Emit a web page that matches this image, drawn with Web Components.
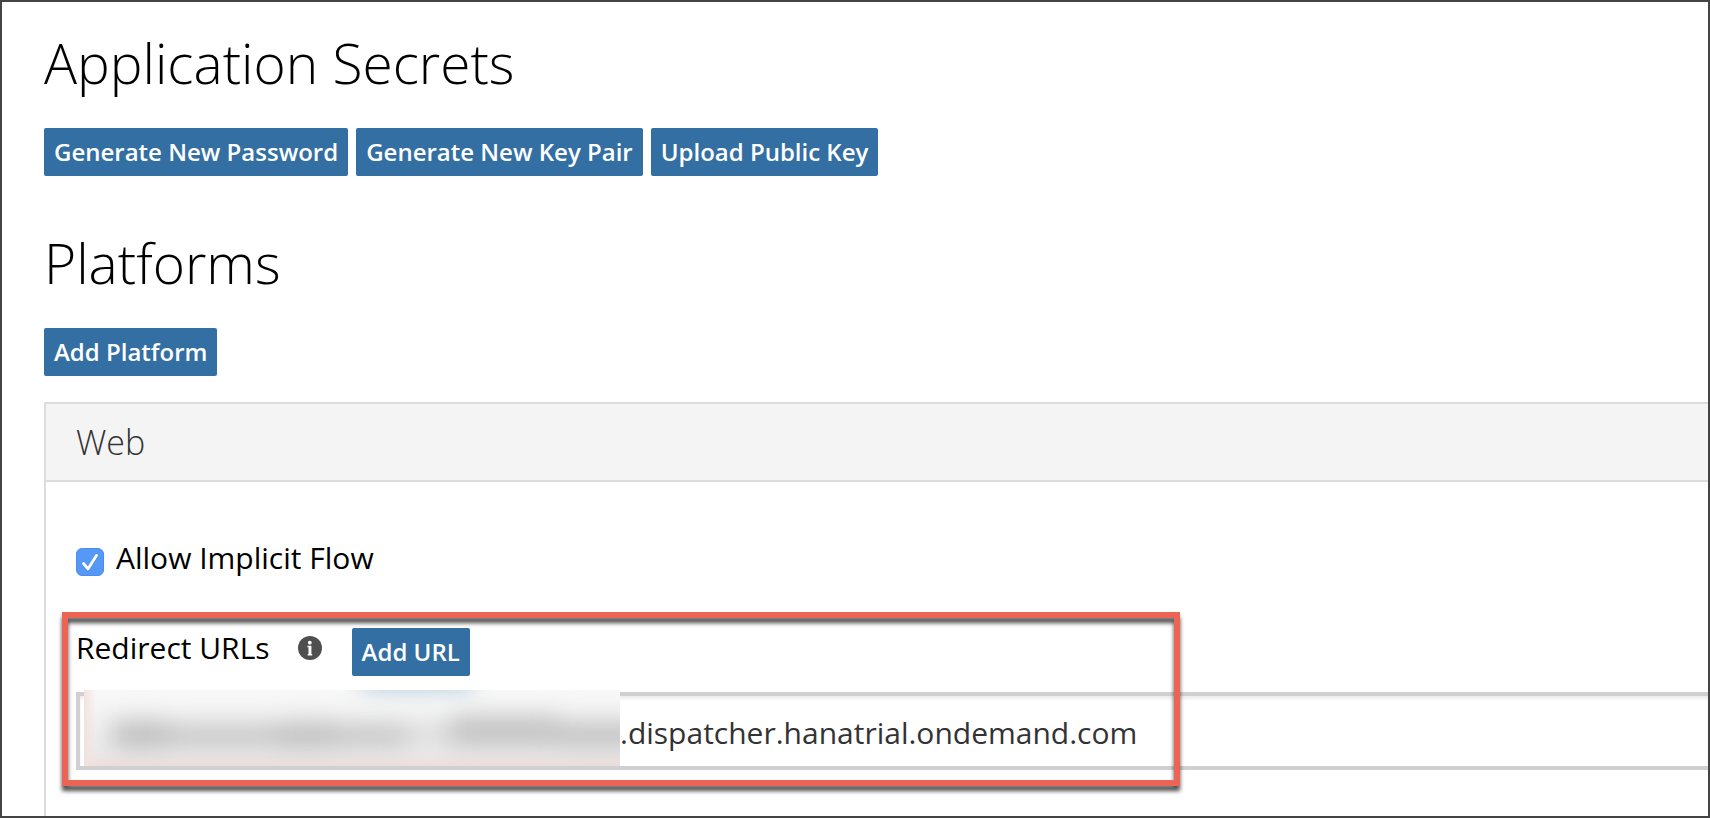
<!DOCTYPE html>
<html lang="en">
<head>
<meta charset="utf-8">
<title>Application Settings</title>
<style>
  body { margin: 0; font-family: "Open Sans", "Noto Sans", sans-serif; color: #000; background: #fff; }
</style>
</head>
<body>
<settings-page>
  <settings-section heading="Application Secrets">
    <action-button>Generate New Password</action-button>
    <action-button>Generate New Key Pair</action-button>
    <action-button>Upload Public Key</action-button>
  </settings-section>
  <settings-section heading="Platforms">
    <action-button>Add Platform</action-button>
  </settings-section>
  <platform-panel heading="Web">
    <check-option>Allow Implicit Flow</check-option>
    <redirect-urls></redirect-urls>
  </platform-panel>
</settings-page>

<script>
const define = (name, html, setup) => customElements.define(name, class extends HTMLElement {
  constructor() {
    super();
    this.attachShadow({ mode: 'open' }).innerHTML = html;
  }
  connectedCallback() { if (setup) setup(this, this.shadowRoot); }
});

define('settings-page', `
  <style>
    :host { display: block; }
    main {
      box-sizing: border-box; min-height: 100vh; border: 2px solid #444;
      padding: 24px 0 0 42px; display: flex; flex-direction: column;
    }
    ::slotted(settings-section:not(:first-child)) { margin-top: 50px; }
    ::slotted(platform-panel) { margin-top: 26px; flex: 1; }
  </style>
  <main><slot></slot></main>`);

define('settings-section', `
  <style>
    :host { display: block; }
    h2 { margin: 0 0 28px; font-size: 55px; line-height: 74px; font-weight: 300; }
    div { display: flex; flex-wrap: wrap; gap: 8px; }
  </style>
  <h2></h2>
  <div><slot></slot></div>`,
  (el, root) => { root.querySelector('h2').textContent = el.getAttribute('heading'); });

define('action-button', `
  <style>
    :host { display: block; }
    button {
      display: block; height: 48px; padding: 0 10px; border: 0; border-radius: 2px;
      background: #336fa2; color: #fff; font: 600 24px/48px "Open Sans", "Noto Sans", sans-serif;
      white-space: nowrap; cursor: pointer;
    }
  </style>
  <button type="button"><slot></slot></button>`);

define('platform-panel', `
  <style>
    :host { display: block; border: solid #dcdcdc; border-width: 2px 0 0 2px; border-top-left-radius: 2px; }
    h3 {
      margin: 0; padding: 0 30px; background: #f4f4f4; border-bottom: 2px solid #dcdcdc;
      color: #333; font-size: 34px; line-height: 76px; font-weight: 300;
    }
    div { padding: 56px 0 46px 30px; }
    ::slotted(redirect-urls) { margin-top: 50px; }
  </style>
  <h3></h3>
  <div><slot></slot></div>`,
  (el, root) => { root.querySelector('h3').textContent = el.getAttribute('heading'); });

define('check-option', `
  <style>
    :host { display: block; }
    label { display: flex; align-items: center; gap: 12px; font-size: 30px; line-height: 40px; }
    span { position: relative; display: block; width: 28px; height: 28px; margin-top: 8px; }
    input {
      appearance: none; display: block; box-sizing: border-box; width: 28px; height: 28px; margin: 0;
      border: 1px solid #4a8cf0; border-radius: 6px; background: #fff;
    }
    input:checked { background: #5598f6; }
    svg { position: absolute; inset: 0; pointer-events: none; }
    input:not(:checked) + svg { display: none; }
  </style>
  <label>
    <span>
      <input type="checkbox" checked>
      <svg width="28" height="28" viewBox="0 0 28 28" fill="none" stroke-linecap="round" stroke-linejoin="round" stroke-width="2.800">
        <path d="M7.500 16.500 12 22 20.500 8.500" stroke="#3c78cf" stroke-opacity=".5"/>
        <path d="M7.500 15.500 12 21 20.500 7.500" stroke="#fff"/>
      </svg>
    </span>
    <slot></slot>
  </label>`);

define('info-icon', `
  <style>
    :host { display: block; width: 24px; height: 24px; }
    svg { display: block; }
  </style>
  <svg width="24" height="24" viewBox="0 0 24 24" role="img" aria-label="Information">
    <circle cx="12" cy="12" r="12" fill="#4f4f4f"/>
    <circle cx="11.800" cy="6.700" r="1.900" fill="#fff"/>
    <path fill="#fff" d="M9.500 9.800H13.400V18H14.200V19.400H9.700V18H10.500V11.200H9.500z"/>
  </svg>`);

define('blurred-text', `
  <style>
    :host { display: block; overflow: hidden; background: linear-gradient(#f8f8f8, #f1f1f1 50%, #ececec 80%, #efdfdd); }
    svg { display: block; width: 100%; height: 100%; }
  </style>
  <svg viewBox="0 0 536 76" preserveAspectRatio="none" aria-hidden="true">
    <defs>
      <filter id="soft" x="-20%" y="-100%" width="140%" height="300%" color-interpolation-filters="sRGB"><feGaussianBlur stdDeviation="12 11"/></filter>
      <linearGradient id="edge"><stop stop-color="#f3e2e0"/><stop offset="1" stop-color="#f3e2e0" stop-opacity="0"/></linearGradient>
    </defs>
    <rect width="12" height="76" fill="url(#edge)"/>
    <g filter="url(#soft)">
      <rect x="278" y="-22" width="110" height="20" fill="#a4c2da"/>
      <rect x="28" y="31" width="56" height="28" fill="#c0c0c0"/>
      <rect x="84" y="34" width="108" height="24" fill="#c9c9c9"/>
      <rect x="192" y="32" width="60" height="27" fill="#c2c2c2"/>
      <rect x="252" y="34" width="70" height="24" fill="#c8c8c8"/>
      <rect x="322" y="36" width="44" height="18" fill="#dadada"/>
      <rect x="366" y="26" width="110" height="31" fill="#c4c4c4"/>
      <rect x="476" y="32" width="100" height="27" fill="#c5c5c5"/>
    </g>
  </svg>`);

define('redirect-urls', `
  <style>
    :host { display: block; position: relative; }
    .head { display: flex; align-items: flex-start; gap: 30px; }
    .name { display: flex; align-items: center; gap: 28px; font-size: 30px; line-height: 40px; }
    .field { position: relative; margin-top: 16px; }
    input {
      display: block; box-sizing: border-box; width: 100%; height: 78px; margin: 0;
      padding: 2px 12px 0 540px; border: 4px solid #d0d0d0; border-right: 0; border-radius: 0; outline: 0;
      background: #fff; box-shadow: inset 0 3px 3px #eee; color: #333;
      font: 400 30px/40px "Open Sans", "Noto Sans", sans-serif;
    }
    blurred-text { position: absolute; left: 8px; top: -2px; width: 536px; height: 76px; }
    .outline {
      position: absolute; left: -14px; top: -16px; box-sizing: border-box; width: 1118px; height: 174px;
      border: 6px solid #ec6454; filter: drop-shadow(0 5px 2px rgba(0, 0, 0, .7)); pointer-events: none;
    }
  </style>
  <div class="head">
    <div class="name"><label for="url">Redirect URLs</label><info-icon></info-icon></div>
    <action-button>Add URL</action-button>
  </div>
  <div class="field">
    <input id="url" type="text" value=".dispatcher.hanatrial.ondemand.com">
    <blurred-text></blurred-text>
  </div>
  <div class="outline"></div>`);
</script>
</body>
</html>
